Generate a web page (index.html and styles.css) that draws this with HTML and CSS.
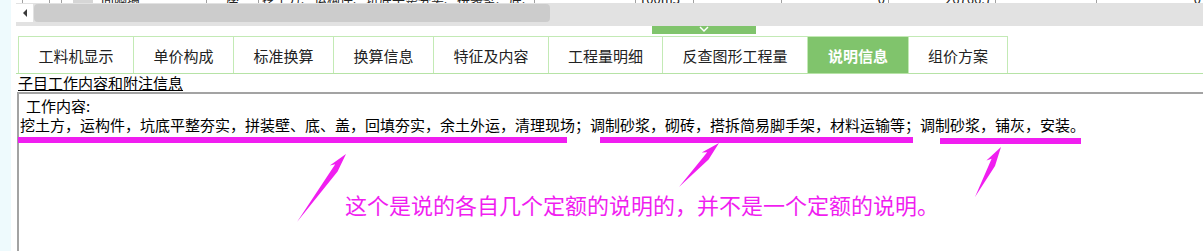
FILE: index.html
```html
<!DOCTYPE html>
<html lang="zh-CN">
<head>
<meta charset="utf-8">
<title>说明信息</title>
<link rel="stylesheet" href="styles.css">
</head>
<body>
<div class="app">
  <div class="side"></div>
  <div class="main">
    <div class="gridrow">
      <div class="cell w3"></div>
      <div class="cell w27"></div>
      <div class="cell w12"></div>
      <div class="cell w145"><span class="gray"></span><span>间隔墙</span></div>
      <div class="cell w52 center"><span>座</span></div>
      <div class="cell w276"><span>挖土方、运构件、坑底平整夯实、拼装壁、底、盖</span></div>
      <div class="cell w101"></div>
      <div class="cell w58"><span>100m3</span></div>
      <div class="cell w88"></div>
      <div class="cell w107 right"><span>0</span></div>
      <div class="cell w107 right"><span>26766.7</span></div>
      <div class="cell w101"></div>
      <div class="cell w108 right"><span>0</span></div>
    </div>
    <div class="hscroll">
      <div class="sbtn"></div>
      <div class="thumb"></div>
    </div>
    <div class="splitter">
      <div class="toggle">
        <svg width="12" height="7" viewBox="0 0 12 7"><polyline points="2,1 6,5 10,1" fill="none" stroke="#ffffff" stroke-width="1.5"/></svg>
      </div>
    </div>
    <div class="tabbar">
      <div class="tab first w116">工料机显示</div>
      <div class="tab w100">单价构成</div>
      <div class="tab w100">标准换算</div>
      <div class="tab w100">换算信息</div>
      <div class="tab w115">特征及内容</div>
      <div class="tab w114">工程量明细</div>
      <div class="tab w145">反查图形工程量</div>
      <div class="tab active w101">说明信息</div>
      <div class="tab w99">组价方案</div>
    </div>
    <div class="title">子目工作内容和附注信息</div>
    <div class="box">
      <div class="line first-line">工作内容:</div>
      <div class="line">挖土方，运构件，坑底平整夯实，拼装壁、底、盖，回填夯实，余土外运，清理现场；调制砂浆，砌砖，搭拆简易脚手架，材料运输等；调制砂浆，铺灰，安装。</div>
    </div>
  </div>
</div>
<div class="annot">
  <svg class="marks" width="1203" height="251" viewBox="0 0 1203 251">
    <rect x="18" y="137" width="549" height="6" fill="#f01ef0"/>
    <rect x="600" y="137" width="313" height="6" fill="#f01ef0"/>
    <rect x="940" y="138" width="141" height="6" fill="#f01ef0"/>
    <polygon points="346,154 329.8,165.4 335.2,164.3 297,222 337.6,171.6" fill="#f01ef0"/>
    <polygon points="719,143 701.7,152.6 707.2,152.2 679,187 708.6,159.5" fill="#f01ef0"/>
    <polygon points="1001,147 986.4,160.6 991.6,158.7 975,197 995,165.9" fill="#f01ef0"/>
  </svg>
  <div class="note">这个是说的各自几个定额的说明的，并不是一个定额的说明。</div>
</div>
</body>
</html>
```

FILE: styles.css
```css
* { box-sizing: border-box; }

body {
  margin: 0;
  width: 1203px;
  height: 251px;
  overflow: hidden;
  background: #ffffff;
  font-family: "Noto Sans CJK SC", "Liberation Sans", sans-serif;
  font-size: 15px;
  color: #000000;
  position: relative;
}

.app {
  display: flex;
  height: 251px;
}

.side {
  width: 11px;
  flex: none;
  background: #eefafd;
}

.main {
  flex: 1;
  min-width: 0;
  margin-left: 5px;
  display: flex;
  flex-direction: column;
}

/* remnant of the grid row above */
.gridrow {
  height: 3px;
  overflow: hidden;
  display: flex;
}
.cell {
  flex: none;
  height: 3px;
  border-right: 1px solid #a0a0a0;
  display: flex;
  align-items: flex-end;
  overflow: hidden;
  font-size: 13px;
  line-height: 13px;
  padding: 0 3px;
  color: #222;
}
.cell span { white-space: nowrap; margin-bottom: -2px; }
.cell .gray { width: 20px; height: 14px; background: #d6d6d6; margin-right: 8px; margin-left: 8px; }
.cell.center { justify-content: center; }
.cell.right { justify-content: flex-end; }
.w3 { width: 3px; }
.w12 { width: 12px; }
.w27 { width: 27px; }
.w52 { width: 52px; }
.w58 { width: 58px; }
.w88 { width: 88px; }
.w99 { width: 99px; }
.w100 { width: 100px; }
.w101 { width: 101px; }
.w107 { width: 107px; }
.w108 { width: 108px; }
.w114 { width: 114px; }
.w115 { width: 115px; }
.w116 { width: 116px; }
.w145 { width: 145px; }
.w276 { width: 276px; }

/* horizontal scrollbar */
.hscroll {
  height: 23px;
  background: #e2e2e2;
  display: flex;
  align-items: flex-start;
  padding-top: 1px;
}
.sbtn {
  width: 17px;
  height: 18px;
  background: #ffffff;
  display: flex;
  align-items: center;
  justify-content: center;
  flex: none;
}
.sbtn::before {
  content: "";
  border-right: 4px solid #3a3a3a;
  border-top: 4px solid transparent;
  border-bottom: 4px solid transparent;
}
.thumb {
  width: 516px;
  height: 18px;
  margin-left: 1px;
  background: #cccccc;
  border-radius: 4px;
  flex: none;
}

/* splitter with collapse toggle */
.splitter {
  height: 10px;
  display: flex;
  padding-left: 636px;
}
.toggle {
  width: 104px;
  height: 8px;
  background: #80c46c;
  display: flex;
  justify-content: center;
  align-items: flex-start;
}
.toggle svg { display: block; }

/* tabs */
.tabbar {
  display: flex;
  height: 38px;
  padding-left: 2px;
  border-bottom: 1px solid #b6e3a6;
}
.tab {
  flex: none;
  border-top: 1px solid #c3eab5;
  border-right: 1px solid #c3eab5;
  display: flex;
  align-items: center;
  justify-content: center;
  color: #222222;
  font-size: 15px;
}
.tab.first { border-left: 1px solid #c3eab5; }
.tab.active {
  background: #80c46c;
  color: #ffffff;
  font-weight: bold;
}

.title {
  height: 18px;
  line-height: 17px;
  padding-left: 2px;
  text-decoration: underline;
  white-space: nowrap;
}

.box {
  flex: 1;
  margin-left: 1px;
  border-top: 2px solid #a3a3a3;
  border-left: 2px solid #a3a3a3;
  padding: 2px 0 0 1px;
}
.line {
  line-height: 19px;
  white-space: nowrap;
}
.first-line { padding-left: 6px; }

/* annotation overlay */
.annot {
  position: absolute;
  left: 0;
  top: 0;
  width: 1203px;
  height: 251px;
  pointer-events: none;
}
.marks { position: absolute; left: 0; top: 0; }
.note {
  position: absolute;
  left: 345px;
  top: 191px;
  font-size: 22px;
  line-height: 26px;
  color: #f01ef0;
  white-space: nowrap;
}
```
